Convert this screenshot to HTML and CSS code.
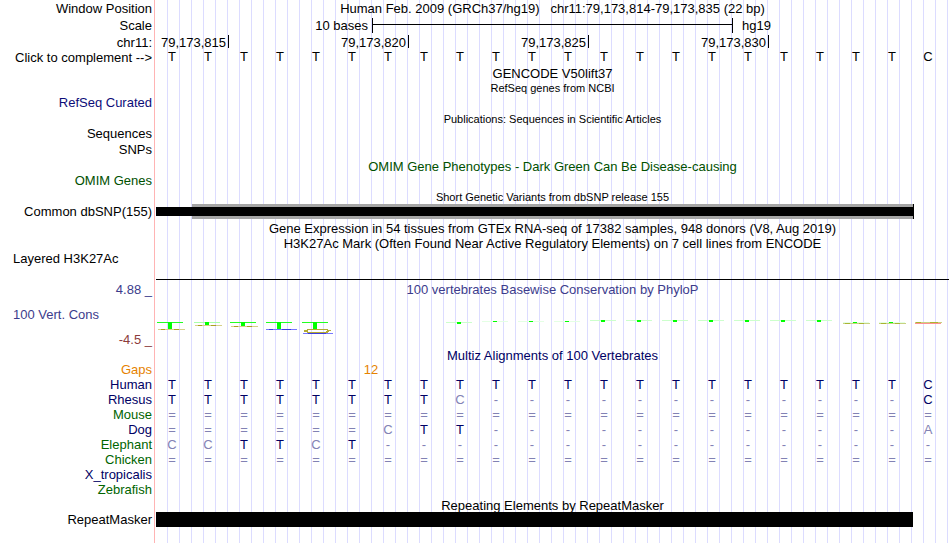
FILE: index.html
```html
<!DOCTYPE html>
<html lang="en">
<head>
  <meta charset="UTF-8">
  <title>Human chr11:79,173,814-79,173,835 - Genome Browser</title>
  <meta name="viewport" content="width=device-width, initial-scale=1.0">
  <link rel="stylesheet" href="styles.css">
</head>
<body>

<main class="browser">
  <!-- Position, scale and ruler -->
  <section class="track">
    <div class="row tall">
      <div class="label">Window Position</div>
      <div class="title">Human Feb. 2009 (GRCh37/hg19) &nbsp; chr11:79,173,814-79,173,835 (22 bp)</div>
    </div>
    <div class="row tall">
      <div class="label">Scale</div>
      <div class="bases">
        <span class="scale-size">10 bases</span>
        <span class="scale-bar"></span>
        <span class="scale-db">hg19</span>
      </div>
    </div>
    <div class="row ruler">
      <div class="label">chr11:</div>
      <div class="bases coords">
        <span class="coord c815">79,173,815</span>
        <span class="coord c820">79,173,820</span>
        <span class="coord c825">79,173,825</span>
        <span class="coord c830">79,173,830</span>
      </div>
    </div>
    <div class="row">
      <div class="label">Click to complement --&gt;</div>
      <div class="bases sequence">
        <span>T</span><span>T</span><span>T</span><span>T</span><span>T</span><span>T</span><span>T</span><span>T</span><span>T</span><span>T</span><span>T</span><span>T</span><span>T</span><span>T</span><span>T</span><span>T</span><span>T</span><span>T</span><span>T</span><span>T</span><span>T</span><span>C</span>
      </div>
    </div>
  </section>

  <!-- Genes -->
  <section class="track">
    <div class="row"><div class="title">GENCODE V50lift37</div></div>
    <div class="row tight"><div class="title small">RefSeq genes from NCBI</div></div>
    <div class="row item"><div class="label refseq">RefSeq Curated</div></div>
  </section>

  <!-- Publications -->
  <section class="track">
    <div class="row tight"><div class="title small">Publications: Sequences in Scientific Articles</div></div>
    <div class="row item"><div class="label">Sequences</div></div>
    <div class="row item"><div class="label">SNPs</div></div>
  </section>

  <!-- OMIM -->
  <section class="track">
    <div class="row tight"><div class="title omim">OMIM Gene Phenotypes - Dark Green Can Be Disease-causing</div></div>
    <div class="row item"><div class="label omim">OMIM Genes</div></div>
  </section>

  <!-- dbSNP -->
  <section class="track">
    <div class="row tight"><div class="title small">Short Genetic Variants from dbSNP release 155</div></div>
    <div class="row item">
      <div class="label">Common dbSNP(155)</div>
      <div class="bases variant">
        <span class="variant-range"></span>
        <span class="variant-allele"></span>
      </div>
    </div>
  </section>

  <!-- Expression and regulation -->
  <section class="track">
    <div class="row"><div class="title">Gene Expression in 54 tissues from GTEx RNA-seq of 17382 samples, 948 donors (V8, Aug 2019)</div></div>
    <div class="row"><div class="title">H3K27Ac Mark (Often Found Near Active Regulatory Elements) on 7 cell lines from ENCODE</div></div>
    <div class="row signal">
      <div class="label left">Layered H3K27Ac</div>
      <div class="baseline"></div>
    </div>
  </section>

  <!-- Conservation -->
  <section class="track conservation">
    <div class="row">
      <div class="label cons-labels">
        <span class="cons-max">4.88 _</span>
        <span class="cons-name">100 Vert. Cons</span>
        <span class="cons-min">-4.5 _</span>
      </div>
      <div>
        <div class="title cons">100 vertebrates Basewise Conservation by PhyloP</div>
        <svg class="logo" viewBox="0 0 793 50" preserveAspectRatio="none" shape-rendering="crispEdges" aria-hidden="true">
          <!-- below-zero scores -->
          <g fill="#22ff22">
            <rect x="1" y="25" width="26" height="1"/>
            <rect x="74" y="25" width="26" height="1"/>
            <rect x="110" y="25" width="26" height="1"/>
            <rect x="146" y="25" width="26" height="1"/>
          </g>
          <rect x="38" y="25" width="26" height="1" fill="#aaffaa"/>
          <g fill="#00ff00">
            <rect x="12" y="25" width="4" height="7"/>
            <rect x="49" y="25" width="4" height="3"/>
            <rect x="85" y="25" width="4" height="4"/>
            <rect x="121" y="25" width="4" height="7"/>
            <rect x="157" y="25" width="4" height="7"/>
          </g>
          <g fill="#d6d08a">
            <rect x="2" y="32" width="27" height="1"/>
            <rect x="39" y="28" width="27" height="1"/>
            <rect x="75" y="29" width="27" height="1"/>
          </g>
          <g fill="#aaa020">
            <rect x="5" y="32" width="4" height="1"/>
            <rect x="18" y="32" width="5" height="1"/>
            <rect x="42" y="28" width="4" height="1"/>
            <rect x="55" y="28" width="5" height="1"/>
            <rect x="78" y="29" width="4" height="1"/>
            <rect x="91" y="29" width="5" height="1"/>
          </g>
          <g fill="#7878ff">
            <rect x="110" y="32" width="31" height="1"/>
            <rect x="147" y="36" width="30" height="1"/>
          </g>
          <g fill="#3c3ce0">
            <rect x="113" y="32" width="4" height="1"/>
            <rect x="126" y="32" width="9" height="1"/>
            <rect x="152" y="36" width="18" height="1"/>
          </g>
          <g fill="#b4aa32">
            <rect x="151" y="32" width="21" height="1"/>
            <rect x="148" y="33" width="4" height="2"/>
            <rect x="171" y="33" width="4" height="1"/>
            <rect x="170" y="34" width="3" height="1"/>
            <rect x="151" y="35" width="21" height="1"/>
          </g>
          <!-- scores close to zero -->
          <g fill="#ccffcc">
            <rect x="290" y="25" width="26" height="1"/>
            <rect x="434" y="23" width="26" height="1"/>
            <rect x="470" y="23" width="26" height="1"/>
            <rect x="506" y="23" width="26" height="1"/>
            <rect x="542" y="23" width="26" height="1"/>
            <rect x="578" y="23" width="26" height="1"/>
            <rect x="614" y="23" width="26" height="1"/>
            <rect x="650" y="23" width="26" height="1"/>
          </g>
          <g fill="#e4ffe4">
            <rect x="326" y="24" width="26" height="1"/>
            <rect x="362" y="24" width="26" height="1"/>
            <rect x="398" y="24" width="26" height="1"/>
            <rect x="687" y="25" width="26" height="1"/>
            <rect x="723" y="25" width="26" height="1"/>
          </g>
          <g fill="#00ff00">
            <rect x="301" y="25" width="4" height="2"/>
            <rect x="337" y="24" width="4" height="1"/>
            <rect x="373" y="24" width="4" height="1"/>
            <rect x="409" y="24" width="4" height="1"/>
            <rect x="445" y="23" width="4" height="2"/>
            <rect x="481" y="23" width="4" height="2"/>
            <rect x="517" y="23" width="4" height="2"/>
            <rect x="553" y="23" width="4" height="2"/>
            <rect x="589" y="23" width="4" height="2"/>
            <rect x="625" y="23" width="4" height="2"/>
            <rect x="661" y="23" width="4" height="2"/>
            <rect x="697" y="25" width="4" height="1"/>
            <rect x="733" y="25" width="4" height="1"/>
          </g>
          <g fill="#c8d282">
            <rect x="687" y="26" width="27" height="1"/>
            <rect x="723" y="26" width="27" height="1"/>
            <rect x="759" y="25" width="27" height="1"/>
          </g>
          <g fill="#aab432">
            <rect x="689" y="26" width="5" height="1"/>
            <rect x="703" y="26" width="5" height="1"/>
            <rect x="725" y="26" width="5" height="1"/>
            <rect x="739" y="26" width="5" height="1"/>
            <rect x="760" y="25" width="5" height="1"/>
            <rect x="774" y="25" width="8" height="1"/>
          </g>
          <rect x="759" y="26" width="26" height="1" fill="#ff9090"/>
        </svg>
      </div>
    </div>
  </section>

  <!-- Multiz alignment -->
  <section class="track">
    <div class="row tight"><div class="title multiz">Multiz Alignments of 100 Vertebrates</div></div>
    <table class="species">
      <colgroup><col class="name-col"><col span="22"></colgroup>
      <tbody>
        <tr class="gaps"><th scope="row">Gaps</th><td colspan="12">12</td><td colspan="10"></td></tr>
        <tr class="navy match"><th scope="row">Human</th><td>T</td><td>T</td><td>T</td><td>T</td><td>T</td><td>T</td><td>T</td><td>T</td><td>T</td><td>T</td><td>T</td><td>T</td><td>T</td><td>T</td><td>T</td><td>T</td><td>T</td><td>T</td><td>T</td><td>T</td><td>T</td><td>C</td></tr>
        <tr class="navy"><th scope="row">Rhesus</th><td class="m">T</td><td class="m">T</td><td class="m">T</td><td class="m">T</td><td class="m">T</td><td class="m">T</td><td class="m">T</td><td class="m">T</td><td>C</td><td>-</td><td>-</td><td>-</td><td>-</td><td>-</td><td>-</td><td>-</td><td>-</td><td>-</td><td>-</td><td>-</td><td>-</td><td class="m">C</td></tr>
        <tr class="green"><th scope="row">Mouse</th><td>=</td><td>=</td><td>=</td><td>=</td><td>=</td><td>=</td><td>=</td><td>=</td><td>=</td><td>=</td><td>=</td><td>=</td><td>=</td><td>=</td><td>=</td><td>=</td><td>=</td><td>=</td><td>=</td><td>=</td><td>=</td><td>=</td></tr>
        <tr class="navy"><th scope="row">Dog</th><td>=</td><td>=</td><td>=</td><td>=</td><td>=</td><td>=</td><td>C</td><td class="m">T</td><td class="m">T</td><td>-</td><td>-</td><td>-</td><td>-</td><td>-</td><td>-</td><td>-</td><td>-</td><td>-</td><td>-</td><td>-</td><td>-</td><td>A</td></tr>
        <tr class="green"><th scope="row">Elephant</th><td>C</td><td>C</td><td class="m">T</td><td class="m">T</td><td>C</td><td class="m">T</td><td>-</td><td>-</td><td>-</td><td>-</td><td>-</td><td>-</td><td>-</td><td>-</td><td>-</td><td>-</td><td>-</td><td>-</td><td>-</td><td>-</td><td>-</td><td>-</td></tr>
        <tr class="green"><th scope="row">Chicken</th><td>=</td><td>=</td><td>=</td><td>=</td><td>=</td><td>=</td><td>=</td><td>=</td><td>=</td><td>=</td><td>=</td><td>=</td><td>=</td><td>=</td><td>=</td><td>=</td><td>=</td><td>=</td><td>=</td><td>=</td><td>=</td><td>=</td></tr>
        <tr class="navy"><th scope="row">X_tropicalis</th><td colspan="22"></td></tr>
        <tr class="green"><th scope="row">Zebrafish</th><td colspan="22"></td></tr>
      </tbody>
    </table>
  </section>

  <!-- RepeatMasker -->
  <section class="track">
    <div class="row tight"><div class="title">Repeating Elements by RepeatMasker</div></div>
    <div class="row">
      <div class="label">RepeatMasker</div>
      <div class="bases"><span class="repeat"></span></div>
    </div>
  </section>
</main>

</body>
</html>
```
FILE: styles.css
```css
body {
  margin: 0;
  background-color: #fff;
  color: #000;
  font-family: "Liberation Sans", Arial, Helvetica, sans-serif;
  font-size: 13px;
  line-height: 15px;
}

/* red divider after the labels, then a guide line every 12px */
.browser {
  box-sizing: border-box;
  min-height: 100vh;
  padding-right: 1px;
  background-image:
    linear-gradient(#ffb4b4, #ffb4b4),
    repeating-linear-gradient(to right, transparent 0 11px, #dcdcff 11px 12px);
  background-position: 154px 0, 156px 0;
  background-size: 1px 100%, 100% 100%;
  background-repeat: no-repeat;
}

.track {
  padding-bottom: 1px;
}

.row {
  display: grid;
  grid-template-columns: 156px 1fr;
  min-height: 15px;
}

.row.tall {
  min-height: 17px;
  line-height: 17px;
}

.row.ruler {
  height: 16px;
  line-height: 17px;
}

.row.tight {
  height: 14px;
  min-height: 0;
}

.row.item {
  min-height: 16px;
}

.label {
  grid-column: 1;
  padding-right: 4px;
  text-align: right;
  white-space: nowrap;
}

.label.left {
  padding-left: 13px;
  text-align: left;
}

.title {
  grid-column: 2;
  text-align: center;
  white-space: nowrap;
}

.title.small {
  font-size: 11px;
}

/* one column per base */
.bases {
  display: grid;
  grid-template-columns: repeat(22, 1fr);
  margin-right: 1px;
}

.refseq {
  color: #0c0c78;
}

.omim {
  color: #005000;
}

/* Scale */
.scale-size {
  grid-column: 1 / 7;
  padding-right: 4px;
  text-align: right;
}

.scale-bar {
  grid-column: 7 / 17;
  height: 15px;
  margin-top: 1px;
  margin-right: -1px;
  border: solid #000;
  border-width: 0 1px;
  background: linear-gradient(#000, #000) 0 6px / 100% 1px no-repeat;
}

.scale-db {
  grid-column: 17 / 23;
  padding-left: 10px;
}

/* Ruler */
.coords {
  padding-top: 1px;
}

.coord {
  height: 13px;
  line-height: 15px;
  margin-right: -1px;
  padding-right: 2px;
  border-right: 1px solid #000;
  text-align: right;
}

.c815 { grid-column: 1 / 3; }
.c820 { grid-column: 6 / 8; }
.c825 { grid-column: 11 / 13; }
.c830 { grid-column: 16 / 18; }

.sequence {
  line-height: 13px;
}

.sequence span {
  padding-right: 4px;
  text-align: center;
}

/* dbSNP item */
.variant {
  grid-template-rows: 15px;
}

.variant-range {
  grid-area: 1 / 2 / 2 / 22;
  margin-right: -2px;
  border-right: 1px solid #000;
  background-color: #a5a5a5;
}

.variant-allele {
  grid-area: 1 / 1 / 2 / 22;
  align-self: center;
  height: 9px;
  margin-right: -1px;
  background-color: #000;
}

.signal {
  min-height: 29px;
}

.baseline {
  border-bottom: 1px solid #000;
}

/* Conservation */
.conservation {
  padding-top: 1px;
}

.cons-labels {
  display: flex;
  flex-direction: column;
  justify-content: space-between;
}

.cons-name {
  padding-left: 13px;
  text-align: left;
}

.cons,
.cons-max,
.cons-name {
  color: #3c3c8c;
}

.cons-min {
  color: #8c3c3c;
}

.logo {
  display: block;
  width: 100%;
  height: 50px;
}

.multiz {
  color: #000064;
}

/* Alignment */
.species {
  width: calc(100% - 1px);
  table-layout: fixed;
  border-collapse: collapse;
}

.name-col {
  width: 156px;
}

.species th {
  padding: 0 4px 0 0;
  font-weight: normal;
  text-align: right;
}

.species td {
  height: 15px;
  padding: 0 4px 0 0;
  color: #8282b4;
  text-align: center;
}

.navy th,
.match td,
.species .m {
  color: #000064;
}

.green th {
  color: #006400;
}

.gaps th,
.gaps td {
  color: #e68200;
}

.gaps td {
  padding-right: 2px;
}

.repeat {
  grid-column: 1 / 22;
  height: 15px;
  margin-right: -1px;
  background-color: #000;
}
```
